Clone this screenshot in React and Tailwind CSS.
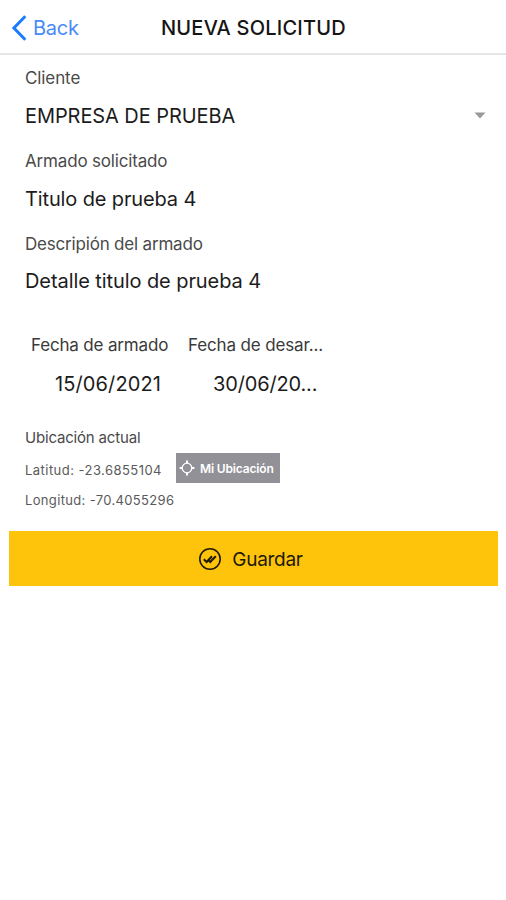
function Field({ label, value, labelClass, valueClass, children }) {
  return (
    <div className="flex h-[83px] flex-col">
      <div className="flex h-[46px] items-center">
        <span className={`text-[17px] leading-6 text-[#4a4a4a] ${labelClass}`}>{label}</span>
      </div>
      <div className="-mt-1 flex h-[37px] items-center justify-between">
        <span className={`text-[20px] leading-7 text-[#1c1c1c] ${valueClass}`}>{value}</span>
        {children}
      </div>
    </div>
  )
}

function BackIcon() {
  return (
    <svg width="16" height="28" viewBox="0 0 16 28" fill="none" stroke="#1a7cfa" strokeWidth="3">
      <path d="M14.3 2.2L2.9 14L14.3 25.8" />
    </svg>
  )
}

function LocateIcon() {
  return (
    <svg width="16" height="16" viewBox="0 0 16 16" fill="none" stroke="#fff" strokeWidth="1.3">
      <circle cx="8" cy="8" r="4.8" />
      <path d="M8 0.6V3.6M8 12.4V15.4M0.6 8H3.6M12.4 8H15.4" strokeWidth="2" />
    </svg>
  )
}

function DoneAllIcon() {
  return (
    <svg width="24" height="24" viewBox="0 0 24 24" fill="none" stroke="#1f1a05" strokeWidth="1.6">
      <circle cx="12" cy="12" r="10.2" />
      <path d="M5.8 12.2L8.6 15L14 9.2M10.6 13.4L12.2 15L17.8 9.2" strokeWidth="2" />
    </svg>
  )
}

function App() {
  return (
    <div className="min-h-[900px] w-full bg-white font-['Inter',sans-serif]">
      <header className="grid h-[55px] grid-cols-[1fr_auto_1fr] items-center border-b-2 border-[#e6e6e6]">
        <button className="flex items-center gap-[6px] pt-[2px] pl-[11px] text-[20px] tracking-[-0.25px] text-[#4a8af8]">
          <BackIcon />
          <span>Back</span>
        </button>
        <h1 className="pt-[2px] pl-px text-[20px] font-medium tracking-[0.22px] text-[#151515]">NUEVA SOLICITUD</h1>
        <div />
      </header>

      <main>
        <section className="pr-5 pl-[25px]">
          <Field label="Cliente" value="EMPRESA DE PRUEBA" labelClass="tracking-[-0.1px]" valueClass="tracking-[-0.08px]">
            <svg width="12" height="7" viewBox="0 0 12 7" fill="#999">
              <path d="M0.5 0.5H11.5L6 6.5Z" />
            </svg>
          </Field>
          <Field
            label="Armado solicitado"
            value="Titulo de prueba 4"
            labelClass="tracking-[-0.17px]"
            valueClass="tracking-[-0.13px]"
          />
          <Field
            label="Descripión del armado"
            value="Detalle titulo de prueba 4"
            labelClass="tracking-[-0.19px]"
            valueClass="-mt-[2px] tracking-[-0.08px]"
          />
        </section>

        <section className="mt-[25px] flex gap-5 pl-[31px] whitespace-nowrap">
          <div className="w-[137px]">
            <div className="text-[17px] leading-8 tracking-[-0.17px] text-[#3a3a3a]">Fecha de armado</div>
            <div className="mt-[7px] pl-6 text-[20px] leading-8 tracking-[0.12px] text-[#1c1c1c]">15/06/2021</div>
          </div>
          <div className="w-[137px]">
            <div className="text-[17px] leading-8 tracking-[-0.14px] text-[#3a3a3a]">Fecha de desar...</div>
            <div className="mt-[7px] pl-[25px] text-[20px] leading-8 tracking-[-0.15px] text-[#1c1c1c]">30/06/20...</div>
          </div>
        </section>

        <section className="mt-[28px] pl-[25px] whitespace-nowrap">
          <div className="text-[15px] leading-5 tracking-[-0.18px] text-[#4a4a4a]">Ubicación actual</div>
          <div className="mt-[5px] flex h-[30px] items-center">
            <span className="w-[151px] pt-[6px] text-[13px] tracking-[0.46px] text-[#5a5a5a]">Latitud: -23.6855104</span>
            <button className="flex h-[30px] w-[104px] items-center gap-[5px] bg-[#919197] pl-[3px] text-[12px] font-semibold tracking-[-0.15px] text-white">
              <LocateIcon />
              <span className="pt-px">Mi Ubicación</span>
            </button>
          </div>
          <div className="mt-[7px] text-[13px] leading-5 tracking-[0.34px] text-[#5a5a5a]">Longitud: -70.4055296</div>
        </section>

        <button className="mx-[9px] mt-[21px] flex h-[55px] w-[489px] items-center justify-center gap-[10px] bg-[#fec40c] pr-[6px] text-[19px] tracking-[-0.3px] text-[#1f1a05]">
          <DoneAllIcon />
          <span className="pt-[3px]">Guardar</span>
        </button>
      </main>
    </div>
  )
}

export default App
